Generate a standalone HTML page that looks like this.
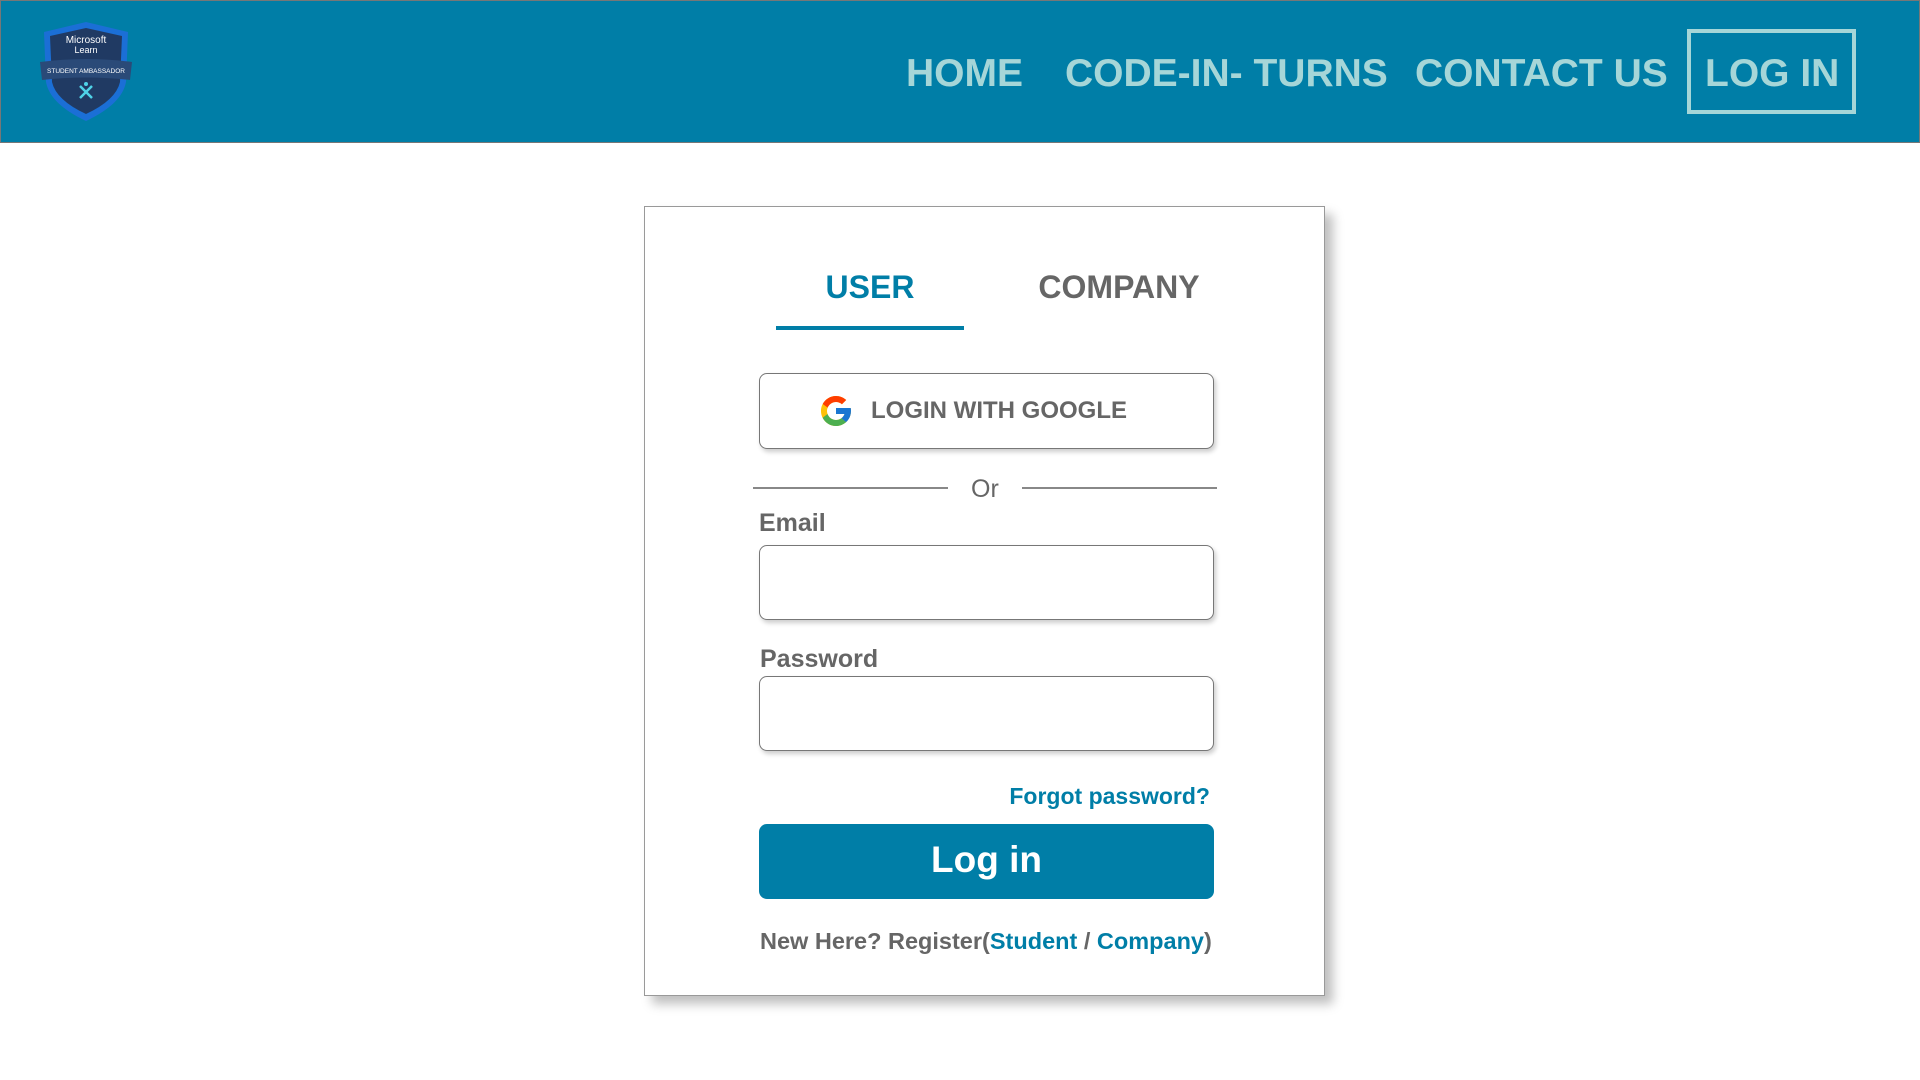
<!DOCTYPE html>
<html><head><meta charset="utf-8"><style>
*{margin:0;padding:0;box-sizing:border-box}
body{width:1920px;height:1080px;background:#fff;font-family:"Liberation Sans",sans-serif;position:relative;overflow:hidden}
.hdr{position:absolute;left:0;top:0;width:1920px;height:143px;background:#007ea7;border:1px solid #777}
.nav{position:absolute;top:49px;font-size:39px;font-weight:bold;color:#a6d6d8;line-height:50px;white-space:nowrap}
.lbox{position:absolute;left:1687px;top:29px;width:169px;height:85px;border:4px solid #a6d6d8}
.card{position:absolute;left:644px;top:206px;width:681px;height:790px;border:1px solid #999;background:#fff;box-shadow:8px 8px 10px rgba(0,0,0,.25)}
.a{position:absolute;white-space:nowrap}
.inp{position:absolute;left:759px;width:455px;height:75px;border:1px solid #777;border-radius:8px;background:#fff;box-shadow:2px 3px 5px rgba(0,0,0,.2)}
.lbl{font-size:25px;font-weight:bold;color:#666}
</style></head><body>
<div class="hdr"></div>
<svg class="a" style="left:36px;top:20px" width="100" height="102" viewBox="0 0 100 102">
<path d="M8 12 L50 2 L92 12 L90 62 Q86 84 50 101 Q14 84 10 62 Z" fill="#1b6fd6"/>
<path d="M14 16 L50 8 L86 16 L84 62 Q80 80 50 94 Q20 80 16 62 Z" fill="#203a63"/>
<path d="M4 42 Q50 36 96 42 L94 60 Q50 55 6 60 Z" fill="#2a4a78"/>
<text x="50" y="23" font-size="10" fill="#fff" text-anchor="middle" font-family="Liberation Sans">Microsoft</text>
<text x="50" y="33" font-size="9" fill="#fff" text-anchor="middle" font-family="Liberation Sans">Learn</text>
<text x="50" y="53" font-size="6.5" fill="#fff" text-anchor="middle" font-family="Liberation Sans">STUDENT AMBASSADOR</text>
<path d="M44 66 L56 78 M56 66 L44 78" stroke="#4fd3e8" stroke-width="2.5"/>
<circle cx="50" cy="64" r="2" fill="#4fd3e8"/>
</svg>
<div class="nav" style="left:906px">HOME</div>
<div class="nav" style="left:1065px">CODE-IN- TURNS</div>
<div class="nav" style="left:1415px">CONTACT US</div>
<div class="lbox"></div>
<div class="nav" style="left:1705px">LOG IN</div>
<div class="card"></div>
<div class="a" style="left:776px;width:188px;top:269px;text-align:center;font-size:32px;font-weight:bold;color:#007ea7">USER</div>
<div class="a" style="left:776px;top:326px;width:188px;height:4px;background:#007ea7"></div>
<div class="a" style="left:1019px;width:200px;top:269px;text-align:center;font-size:32px;font-weight:bold;color:#666">COMPANY</div>
<div class="inp" style="top:373px;height:76px"></div>
<svg class="a" style="left:818px;top:393px" width="36" height="36" viewBox="0 0 48 48">
<path fill="#FFC107" d="M43.6 20H24v8h11.3C33.7 32.7 29.3 36 24 36c-6.6 0-12-5.4-12-12s5.4-12 12-12c3 0 5.8 1.1 7.9 3l5.7-5.7C34 6.1 29.3 4 24 4 13 4 4 13 4 24s9 20 20 20 20-9 20-20c0-1.300-.1-2.7-.4-4z"/>
<path fill="#FF3D00" d="M6.3 14.7l6.6 4.8C14.7 15.1 19 12 24 12c3 0 5.8 1.1 7.9 3l5.7-5.7C34 6.1 29.3 4 24 4 16.3 4 9.7 8.3 6.3 14.7z"/>
<path fill="#4CAF50" d="M24 44c5.2 0 9.9-2 13.4-5.2l-6.2-5.2C29.2 35.1 26.7 36 24 36c-5.2 0-9.6-3.3-11.3-8l-6.5 5C9.5 39.6 16.2 44 24 44z"/>
<path fill="#1976D2" d="M43.6 20H24v8h11.3c-.8 2.2-2.2 4.2-4.1 5.6l6.2 5.2C37 39.2 44 34 44 24c0-1.3-.1-2.7-.4-4z"/>
</svg>
<div class="a" style="left:871px;top:397px;font-size:24px;font-weight:bold;color:#666">LOGIN WITH GOOGLE</div>
<div class="a" style="left:753px;top:487px;width:195px;height:2px;background:#888"></div>
<div class="a" style="left:1022px;top:487px;width:195px;height:2px;background:#888"></div>
<div class="a" style="left:971px;top:475px;font-size:25px;color:#666">Or</div>
<div class="a lbl" style="left:759px;top:509px">Email</div>
<div class="inp" style="top:545px"></div>
<div class="a lbl" style="left:760px;top:645px">Password</div>
<div class="inp" style="top:676px"></div>
<div class="a" style="left:1000px;width:210px;text-align:right;top:783px;font-size:23px;font-weight:bold;color:#007ea7">Forgot password?</div>
<div class="a" style="left:759px;top:824px;width:455px;height:75px;border-radius:8px;background:#007ea7;color:#fff;font-size:37px;font-weight:bold;text-align:center;line-height:72px">Log in</div>
<div class="a" style="left:760px;top:928px;font-size:23.5px;font-weight:bold;color:#666">New Here? Register(<span style="color:#007ea7">Student</span> / <span style="color:#007ea7">Company</span>)</div>
</body></html>
